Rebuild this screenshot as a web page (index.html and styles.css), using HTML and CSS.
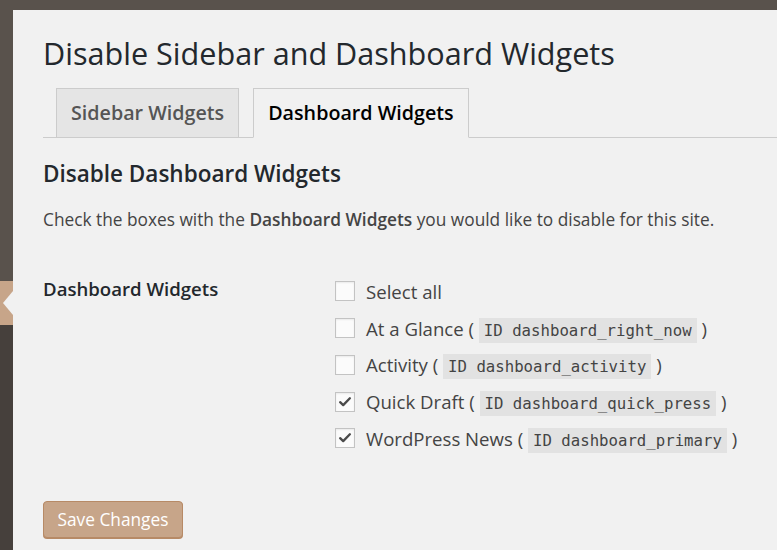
FILE: index.html
```html
<!DOCTYPE html>
<html lang="en">
<head>
<meta charset="utf-8">
<title>Disable Sidebar and Dashboard Widgets</title>
<link rel="stylesheet" href="styles.css">
</head>
<body>
<div class="adminbar"></div>
<div class="layout">
  <aside class="adminmenu">
    <div class="menu-top"></div>
    <div class="menu-current"></div>
    <div class="menu-rest"></div>
  </aside>
  <main class="content">
    <h1 class="page-title">Disable Sidebar and Dashboard Widgets</h1>
    <nav class="tabs">
      <a class="tab">Sidebar Widgets</a>
      <a class="tab tab-active">Dashboard Widgets</a>
    </nav>
    <h2 class="section-title">Disable Dashboard Widgets</h2>
    <p class="intro">Check the boxes with the <strong>Dashboard Widgets</strong> you would like to disable for this site.</p>
    <div class="form-row">
      <div class="form-label">Dashboard Widgets</div>
      <ul class="checks">
        <li class="check"><span class="box"></span><span>Select all</span></li>
        <li class="check"><span class="box"></span><span>At a Glance ( <code>ID dashboard_right_now</code> )</span></li>
        <li class="check"><span class="box"></span><span>Activity ( <code>ID dashboard_activity</code> )</span></li>
        <li class="check"><span class="box checked"><svg viewBox="0 0 20 20" width="20" height="20"><path d="M4.6 10.2 L8 13.4 L15.4 5.8" fill="none" stroke="#4a4a4a" stroke-width="2.6" stroke-linecap="round" stroke-linejoin="round"/></svg></span><span>Quick Draft ( <code>ID dashboard_quick_press</code> )</span></li>
        <li class="check"><span class="box checked"><svg viewBox="0 0 20 20" width="20" height="20"><path d="M4.6 10.2 L8 13.4 L15.4 5.8" fill="none" stroke="#4a4a4a" stroke-width="2.6" stroke-linecap="round" stroke-linejoin="round"/></svg></span><span>WordPress News ( <code>ID dashboard_primary</code> )</span></li>
      </ul>
    </div>
    <div class="actions">
      <button class="button-primary" type="button">Save Changes</button>
    </div>
  </main>
</div>
</body>
</html>
```

FILE: styles.css
```css
html, body {
  margin: 0;
  padding: 0;
  height: 100%;
}
body {
  background: #f1f1f1;
  font-family: "Open Sans", "Noto Sans", sans-serif;
  color: #444;
  overflow: hidden;
}
.adminbar {
  height: 10px;
  background: #59524c;
}
.layout {
  display: flex;
  height: 540px;
}
.adminmenu {
  width: 13px;
  display: flex;
  flex-direction: column;
  flex-shrink: 0;
}
.menu-top {
  height: 271px;
  background: #59524c;
}
.menu-current {
  height: 44px;
  background: #c7a589;
  position: relative;
}
.menu-current::after {
  content: "";
  position: absolute;
  right: 0;
  top: 10px;
  border-right: 10px solid #f1f1f1;
  border-top: 12px solid transparent;
  border-bottom: 12px solid transparent;
}
.menu-rest {
  flex: 1;
  background: #46403c;
}
.content {
  flex: 1;
  padding-left: 30px;
  display: flex;
  flex-direction: column;
}
.page-title {
  margin: 23px 0 0 0;
  font-size: 30.6px;
  line-height: 40px;
  font-weight: 400;
  color: #23282d;
}
.tabs {
  margin-top: 15px;
  display: flex;
  gap: 14px;
  padding-left: 13px;
  border-bottom: 1px solid #ccc;
}
.tab {
  margin-bottom: -1px;
  border: 1px solid #ccc;
  background: #e5e5e5;
  color: #555;
  font-size: 19.7px;
  font-weight: 600;
  line-height: 24px;
  padding: 12px 14px 12px;
}
.tab-active {
  background: #f1f1f1;
  color: #000;
  border-bottom-color: #f1f1f1;
}
.section-title {
  margin: 21px 0 0 0;
  font-size: 22.5px;
  line-height: 30px;
  font-weight: 600;
  color: #23282d;
}
.intro {
  margin: 19px 0 0 0;
  font-size: 17.3px;
  line-height: 24px;
  color: #444;
}
.intro strong {
  font-weight: 600;
}
.form-row {
  display: flex;
  margin-top: 44px;
}
.form-label {
  width: 292px;
  flex-shrink: 0;
  font-size: 18.6px;
  line-height: 26px;
  font-weight: 600;
  color: #23282d;
}
.checks {
  list-style: none;
  margin: 3px 0 0 0;
  padding: 0;
  display: flex;
  flex-direction: column;
  gap: 12.3px;
}
.check {
  display: flex;
  align-items: center;
  gap: 11px;
  height: 24.5px;
  font-size: 18.6px;
  color: #444;
  white-space: nowrap;
}
.box {
  width: 18px;
  height: 18px;
  border: 1px solid #c3c3c3;
  background: #fbfbfb;
  box-shadow: inset 0 1px 2px rgba(0,0,0,0.07);
  display: flex;
  align-items: center;
  justify-content: center;
  flex-shrink: 0;
}
.box svg {
  display: block;
}
code {
  font-family: "DejaVu Sans Mono", "Liberation Mono", monospace;
  font-size: 15.7px;
  background: #e2e2e2;
  color: #444;
  padding: 3px 5px 3px;
}
.actions {
  margin-top: 50px;
}
.button-primary {
  width: 140px;
  height: 37px;
  background: #c7a589;
  border: 1px solid #b78a66;
  border-radius: 4px;
  box-shadow: 0 1px 0 #b78a66;
  color: #fff;
  font-family: "Open Sans", "Noto Sans", sans-serif;
  font-size: 17.3px;
  padding: 0;
}
```
